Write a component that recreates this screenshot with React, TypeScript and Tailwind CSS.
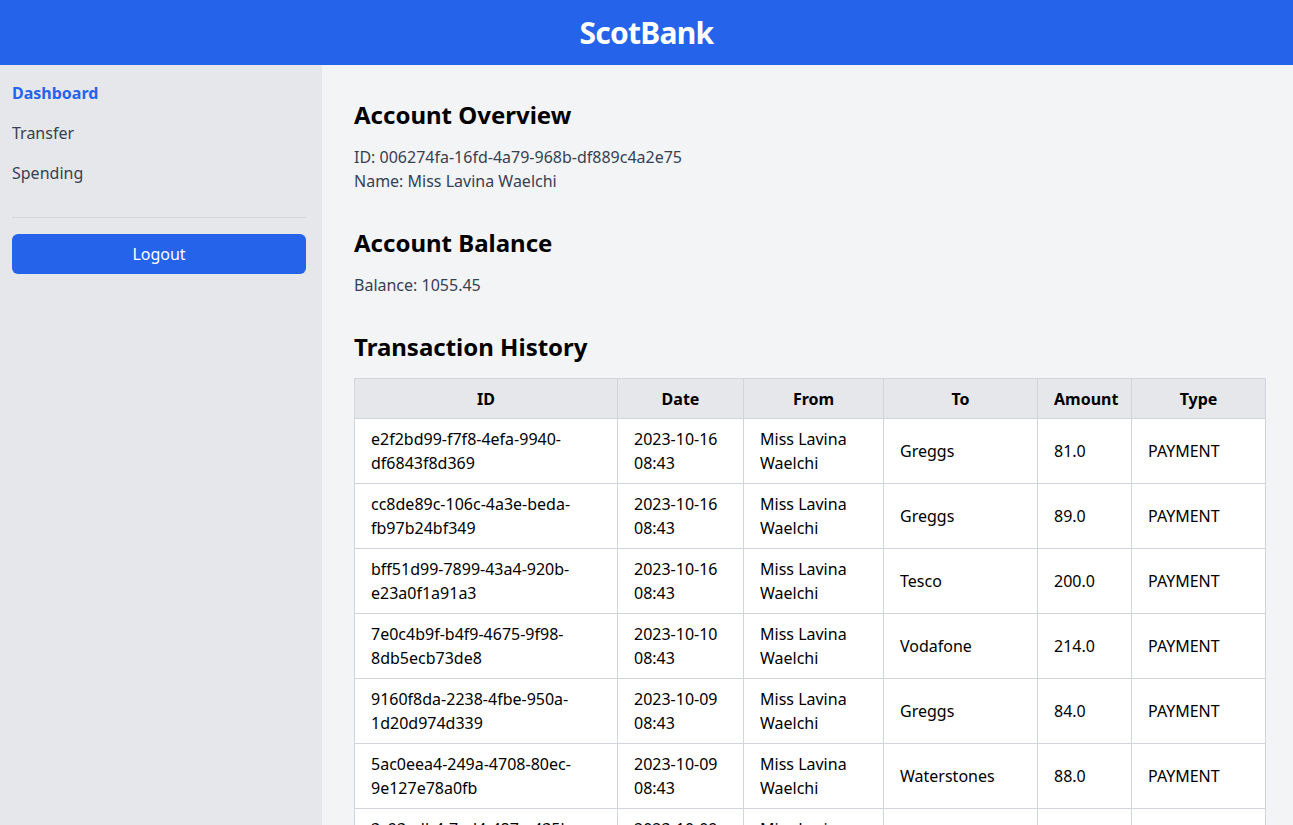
import React from "react";

const transactions = [
  { id: "e2f2bd99-f7f8-4efa-9940-df6843f8d369", date: "2023-10-16 08:43", from: "Miss Lavina Waelchi", to: "Greggs", amount: "81.0", type: "PAYMENT" },
  { id: "cc8de89c-106c-4a3e-beda-fb97b24bf349", date: "2023-10-16 08:43", from: "Miss Lavina Waelchi", to: "Greggs", amount: "89.0", type: "PAYMENT" },
  { id: "bff51d99-7899-43a4-920b-e23a0f1a91a3", date: "2023-10-16 08:43", from: "Miss Lavina Waelchi", to: "Tesco", amount: "200.0", type: "PAYMENT" },
  { id: "7e0c4b9f-b4f9-4675-9f98-8db5ecb73de8", date: "2023-10-10 08:43", from: "Miss Lavina Waelchi", to: "Vodafone", amount: "214.0", type: "PAYMENT" },
  { id: "9160f8da-2238-4fbe-950a-1d20d974d339", date: "2023-10-09 08:43", from: "Miss Lavina Waelchi", to: "Greggs", amount: "84.0", type: "PAYMENT" },
  { id: "5ac0eea4-249a-4708-80ec-9e127e78a0fb", date: "2023-10-09 08:43", from: "Miss Lavina Waelchi", to: "Waterstones", amount: "88.0", type: "PAYMENT" },
  { id: "3c93adb4-7ed4-487a-435b-b2d4e3c1a8f7", date: "2023-10-09 08:43", from: "Miss Lavina Waelchi", to: "Tesco", amount: "52.0", type: "PAYMENT" },
  { id: "a41e77c2-0b3d-4c19-8e5f-6d2a91f0b7c4", date: "2023-10-08 08:43", from: "Miss Lavina Waelchi", to: "Greggs", amount: "76.0", type: "PAYMENT" },
];

const font = { fontFamily: '"Noto Sans", "Open Sans", sans-serif' };

export default function App() {
  return (
    <div className="min-h-screen flex flex-col bg-[#f3f4f6] text-black" style={font}>
      {/* Header */}
      <header className="h-[65px] bg-[#2563eb] flex items-center justify-center shrink-0">
        <h1 className="text-3xl font-bold text-white tracking-tight">ScotBank</h1>
      </header>

      <div className="flex flex-1">
        {/* Sidebar */}
        <aside className="w-[322px] shrink-0 bg-[#e5e7eb] pl-3 pr-4 pt-4">
          <nav className="flex flex-col gap-4">
            <a className="text-[#2563eb] font-bold text-base leading-6">Dashboard</a>
            <a className="text-[#374151] text-base leading-6">Transfer</a>
            <a className="text-[#374151] text-base leading-6">Spending</a>
          </nav>
          <hr className="mt-[32px] border-[#d1d5db]" />
          <button className="mt-4 w-full h-10 bg-[#2563eb] text-white rounded-md text-base">Logout</button>
        </aside>

        {/* Main */}
        <main className="flex-1 pl-8 pr-[27px] pt-[34px] pb-8">
          <section className="mb-[34px]">
            <h2 className="text-2xl font-bold leading-8 mb-[14px]">Account Overview</h2>
            <p className="text-[#374151] leading-6">ID: 006274fa-16fd-4a79-968b-df889c4a2e75</p>
            <p className="text-[#374151] leading-6">Name: Miss Lavina Waelchi</p>
          </section>

          <section className="mb-[34px]">
            <h2 className="text-2xl font-bold leading-8 mb-[14px]">Account Balance</h2>
            <p className="text-[#374151] leading-6">Balance: 1055.45</p>
          </section>

          <section>
            <h2 className="text-2xl font-bold leading-8 mb-[15px]">Transaction History</h2>
            <table className="w-full border-collapse bg-white table-fixed">
              <colgroup>
                <col className="w-[263px]" />
                <col className="w-[126px]" />
                <col className="w-[140px]" />
                <col className="w-[154px]" />
                <col className="w-[94px]" />
                <col />
              </colgroup>
              <thead>
                <tr className="bg-[#e5e7eb]">
                  {["ID", "Date", "From", "To", "Amount", "Type"].map((h) => (
                    <th key={h} className="border border-[#d1d5db] px-4 py-[7.5px] font-bold text-center leading-6">
                      {h}
                    </th>
                  ))}
                </tr>
              </thead>
              <tbody>
                {transactions.map((t) => (
                  <tr key={t.id}>
                    <td className="border border-[#d1d5db] px-4 py-2 leading-6 break-words">{t.id}</td>
                    <td className="border border-[#d1d5db] px-4 py-2 leading-6">{t.date}</td>
                    <td className="border border-[#d1d5db] px-4 py-2 leading-6">{t.from}</td>
                    <td className="border border-[#d1d5db] px-4 py-2 leading-6">{t.to}</td>
                    <td className="border border-[#d1d5db] px-4 py-2 leading-6">{t.amount}</td>
                    <td className="border border-[#d1d5db] px-4 py-2 leading-6">{t.type}</td>
                  </tr>
                ))}
              </tbody>
            </table>
          </section>
        </main>
      </div>
    </div>
  );
}
